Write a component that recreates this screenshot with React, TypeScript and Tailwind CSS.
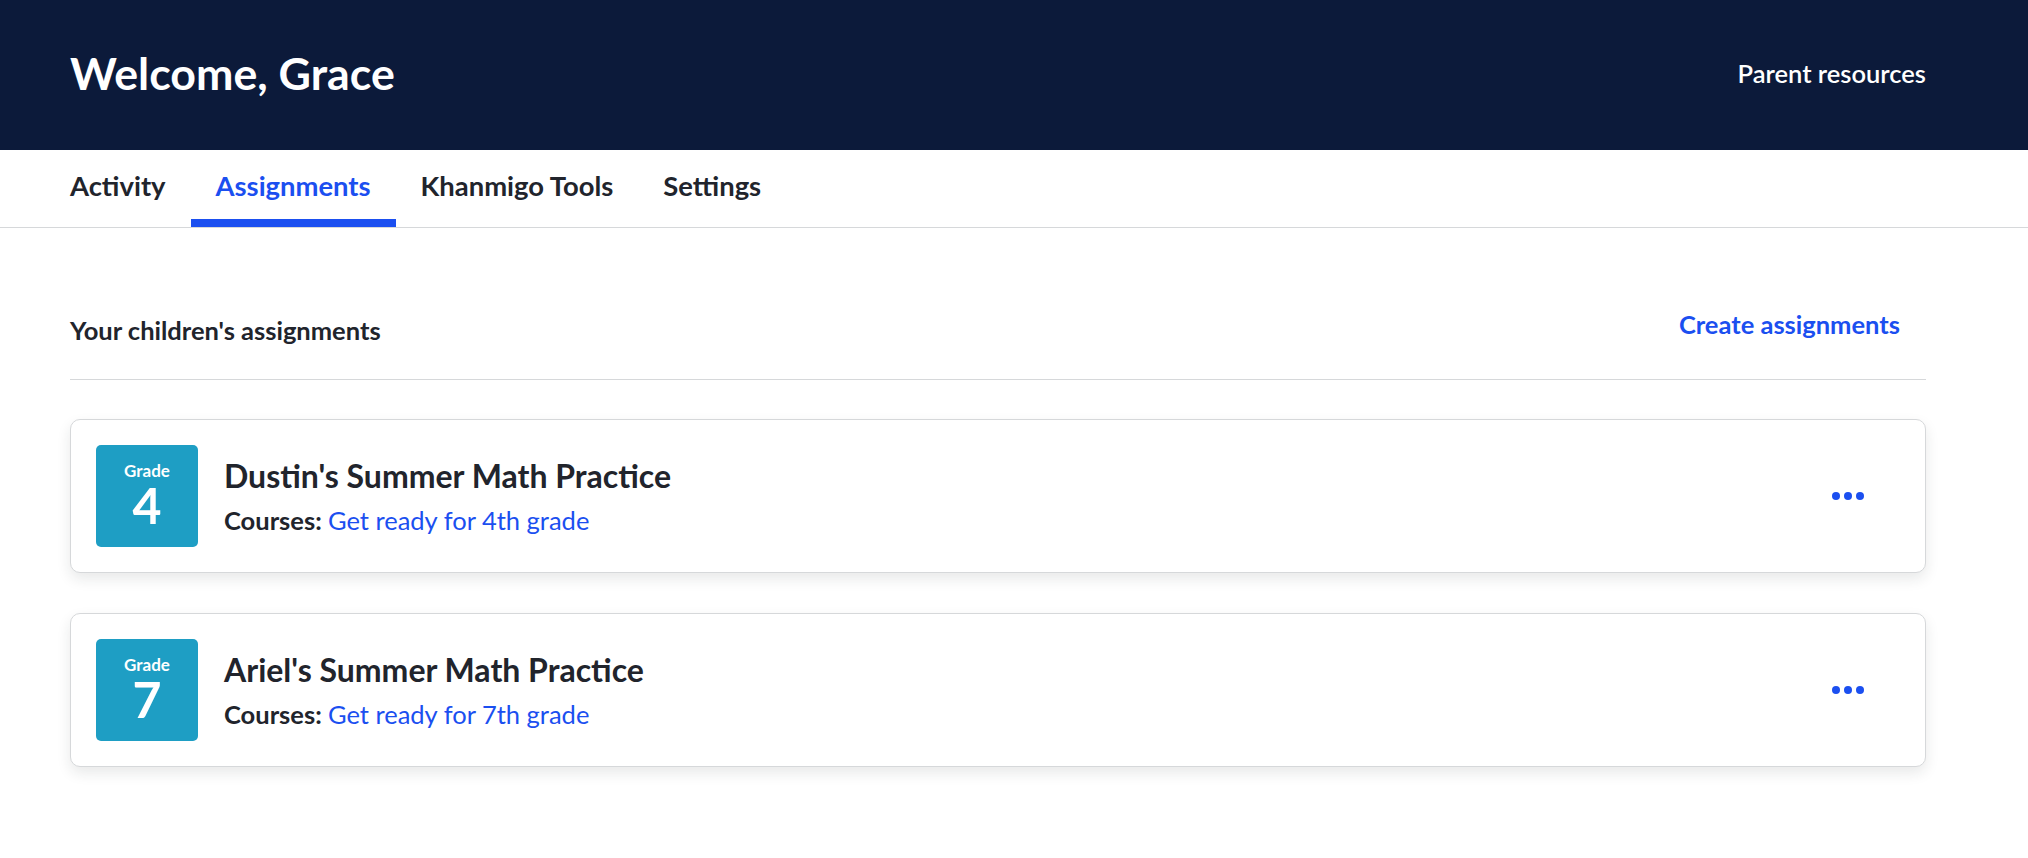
const tabs = ["Activity", "Assignments", "Khanmigo Tools", "Settings"];

interface Assignment {
    grade: number;
    title: string;
    course: string;
}

const assignments: Assignment[] = [
    { grade: 4, title: "Dustin's Summer Math Practice", course: "Get ready for 4th grade" },
    { grade: 7, title: "Ariel's Summer Math Practice", course: "Get ready for 7th grade" },
];

function AssignmentCard({ grade, title, course }: Assignment) {
    return (
        <div className="flex items-center rounded-[10px] border border-[#d6d8da] bg-white p-[25px] shadow-[0_6px_14px_rgba(33,36,44,0.10)]">
            {/* Grade badge */}
            <div className="flex h-[102px] w-[102px] shrink-0 flex-col items-center rounded-[5px] bg-[#1e9ec4] pt-[16px] text-white">
                <span className="text-[17px] font-bold leading-[20px]">Grade</span>
                <span className="text-[50px] font-bold leading-[48px]">{grade}</span>
            </div>
            <div className="ml-[26px] flex flex-1 flex-col">
                <h3 className="text-[32px] font-bold leading-[38px] text-[#21242c]">{title}</h3>
                <p className="mt-[10px] text-[25.5px] leading-[30px] text-[#21242c]">
                    <span className="font-bold">Courses: </span>
                    <a className="text-[#1b4ff0]">{course}</a>
                </p>
            </div>
            <button className="mr-[36px] flex items-center gap-[4px]" aria-label="More options">
                <span className="h-[8px] w-[8px] rounded-full bg-[#1b4ff0]" />
                <span className="h-[8px] w-[8px] rounded-full bg-[#1b4ff0]" />
                <span className="h-[8px] w-[8px] rounded-full bg-[#1b4ff0]" />
            </button>
        </div>
    );
}

export default function App() {
    return (
        <div className="min-h-screen bg-white font-['Lato',sans-serif] text-[#21242c]">
            {/* Header */}
            <header className="flex h-[150px] items-center justify-between bg-[#0c1a3a] pb-[4px] pl-[70px] pr-[102px]">
                <h1 className="text-[44.7px] font-bold leading-none text-white">Welcome, Grace</h1>
                <a className="text-[25.5px] font-semibold text-white">Parent resources</a>
            </header>

            {/* Tabs */}
            <nav className="flex h-[78px] border-b border-[#d6d8da] pl-[45px]">
                {tabs.map((tab) => {
                    const active = tab === "Assignments";
                    return (
                        <div key={tab} className="relative flex items-center px-[25px] pb-[5px]">
                            <span className={`text-[27.4px] font-bold ${active ? "text-[#1b4ff0]" : "text-[#21242c]"}`}>{tab}</span>
                            {active && <span className="absolute bottom-0 left-0 right-0 h-[8px] bg-[#1b4ff0]" />}
                        </div>
                    );
                })}
            </nav>

            <main className="pl-[70px] pr-[102px]">
                <div className="flex items-start justify-between border-b border-[#d6d8da] pb-[35px] pt-[82px]">
                    <h2 className="mt-[6px] text-[25.5px] font-bold leading-[28px]">Your children's assignments</h2>
                    <button className="mr-[26px] text-[25.5px] font-bold leading-[28px] text-[#1b4ff0]">Create assignments</button>
                </div>

                <div className="mt-[39px] flex flex-col gap-[40px]">
                    {assignments.map((a) => (
                        <AssignmentCard key={a.title} {...a} />
                    ))}
                </div>
            </main>
        </div>
    );
}
